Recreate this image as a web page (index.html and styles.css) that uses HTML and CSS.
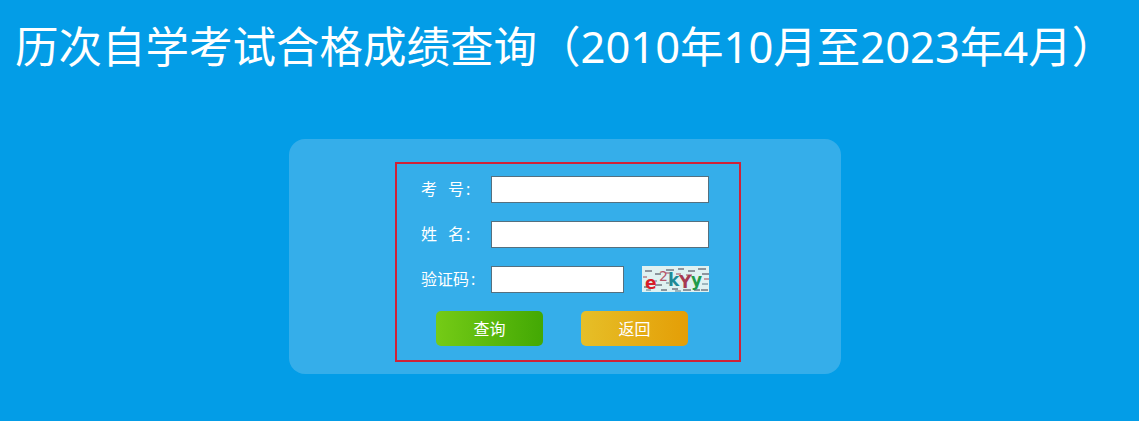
FILE: index.html
```html
<!DOCTYPE html>
<html lang="zh-CN">
<head>
<meta charset="utf-8">
<title>历次自学考试合格成绩查询</title>
<link rel="stylesheet" href="styles.css">
</head>
<body>
<h1 class="title">历次自学考试合格成绩查询（2010年10月至2023年4月）</h1>
<main class="panel">
  <form class="form">
    <div class="row">
      <label class="label"><span class="spread">考</span>号<span class="colon">:</span></label>
      <input class="input" type="text">
    </div>
    <div class="row">
      <label class="label"><span class="spread">姓</span>名<span class="colon">:</span></label>
      <input class="input" type="text">
    </div>
    <div class="row">
      <label class="label">验证码<span class="colon">:</span></label>
      <input class="input input-short" type="text">
      <svg class="captcha" viewBox="0 0 67 26" width="67" height="26" aria-label="captcha">
        <rect width="67" height="26" fill="#dff1f1"/>
        <g stroke-width="1">
          <path d="M3 5h7M13 8h6M24 4h8M36 3h6M46 5h7M56 3h8M60 8h7" stroke="#3a3a4a"/>
          <path d="M1 11h4M24 7h6M34 8h5M44 9h6M62 13h5" stroke="#a04a5a"/>
          <path d="M2 21h3M13 19h7M19 24h6M30 23h6M41 24h8M52 24h6M59 24h7" stroke="#3a3a4a"/>
          <path d="M10 15h5M24 17h3M60 18h6M4 24h5M33 25h6" stroke="#5a7a8a"/>
        </g>
        <text class="cap cap-e" x="3" y="23" fill="#d81e2a">e</text>
        <text class="cap cap-2" x="17" y="15" fill="#b5566a">2</text>
        <text class="cap cap-k" x="26" y="20" fill="#1f8a96">k</text>
        <text class="cap cap-y1" x="37" y="22" fill="#a63a52">Y</text>
        <text class="cap cap-y2" x="49" y="20" fill="#1f9a4a">y</text>
      </svg>
    </div>
    <div class="actions">
      <button class="btn btn-green" type="button">查询</button>
      <button class="btn btn-orange" type="button">返回</button>
    </div>
  </form>
</main>
</body>
</html>
```

FILE: styles.css
```css
html, body {
  margin: 0;
  height: 100%;
}
body {
  background: #039de7;
  overflow: hidden;
  font-family: "Noto Sans", "Noto Sans CJK SC", sans-serif;
  color: #fff;
}
.title {
  margin: 0;
  padding: 15px 0 0 15px;
  height: 125px;
  box-sizing: border-box;
  font-size: 43.5px;
  line-height: 62px;
  font-weight: 400;
  white-space: nowrap;
}
.panel {
  box-sizing: border-box;
  width: 552px;
  height: 235px;
  margin: 14px 0 0 289px;
  padding-top: 23px;
  background: #35aeea;
  border-radius: 16px;
}
.form {
  box-sizing: border-box;
  width: 346px;
  height: 200px;
  margin-left: 106px;
  padding: 12px 0 0 24px;
  border: 2px solid #cf2238;
}
.row {
  display: flex;
  height: 27px;
  margin-bottom: 18px;
}
.label {
  width: 70px;
  font-size: 16px;
  line-height: 27px;
}
.spread {
  margin-right: 11px;
}
.colon {
  margin-left: 2px;
}
.input {
  box-sizing: border-box;
  width: 218px;
  height: 27px;
  margin: 0;
  padding: 0;
  background: #fff;
  border: 1px solid #55707f;
}
.input-short {
  width: 133px;
}
.captcha {
  display: block;
  margin-left: 18px;
}
.cap {
  font-family: "DejaVu Sans", sans-serif;
  font-weight: 700;
  font-size: 17px;
}
.cap-2 {
  font-size: 14px;
  font-weight: 400;
}
.actions {
  display: flex;
  gap: 38px;
  margin: 0 0 0 15px;
}
.btn {
  width: 107px;
  height: 35px;
  padding: 0 0 2px;
  border: 0;
  border-radius: 5px;
  color: #fff;
  font-family: inherit;
  font-size: 16px;
}
.btn-green {
  background: linear-gradient(to right, #75cb16, #43a804);
}
.btn-orange {
  background: linear-gradient(to right, #e6bf28, #e49e06);
}
```
